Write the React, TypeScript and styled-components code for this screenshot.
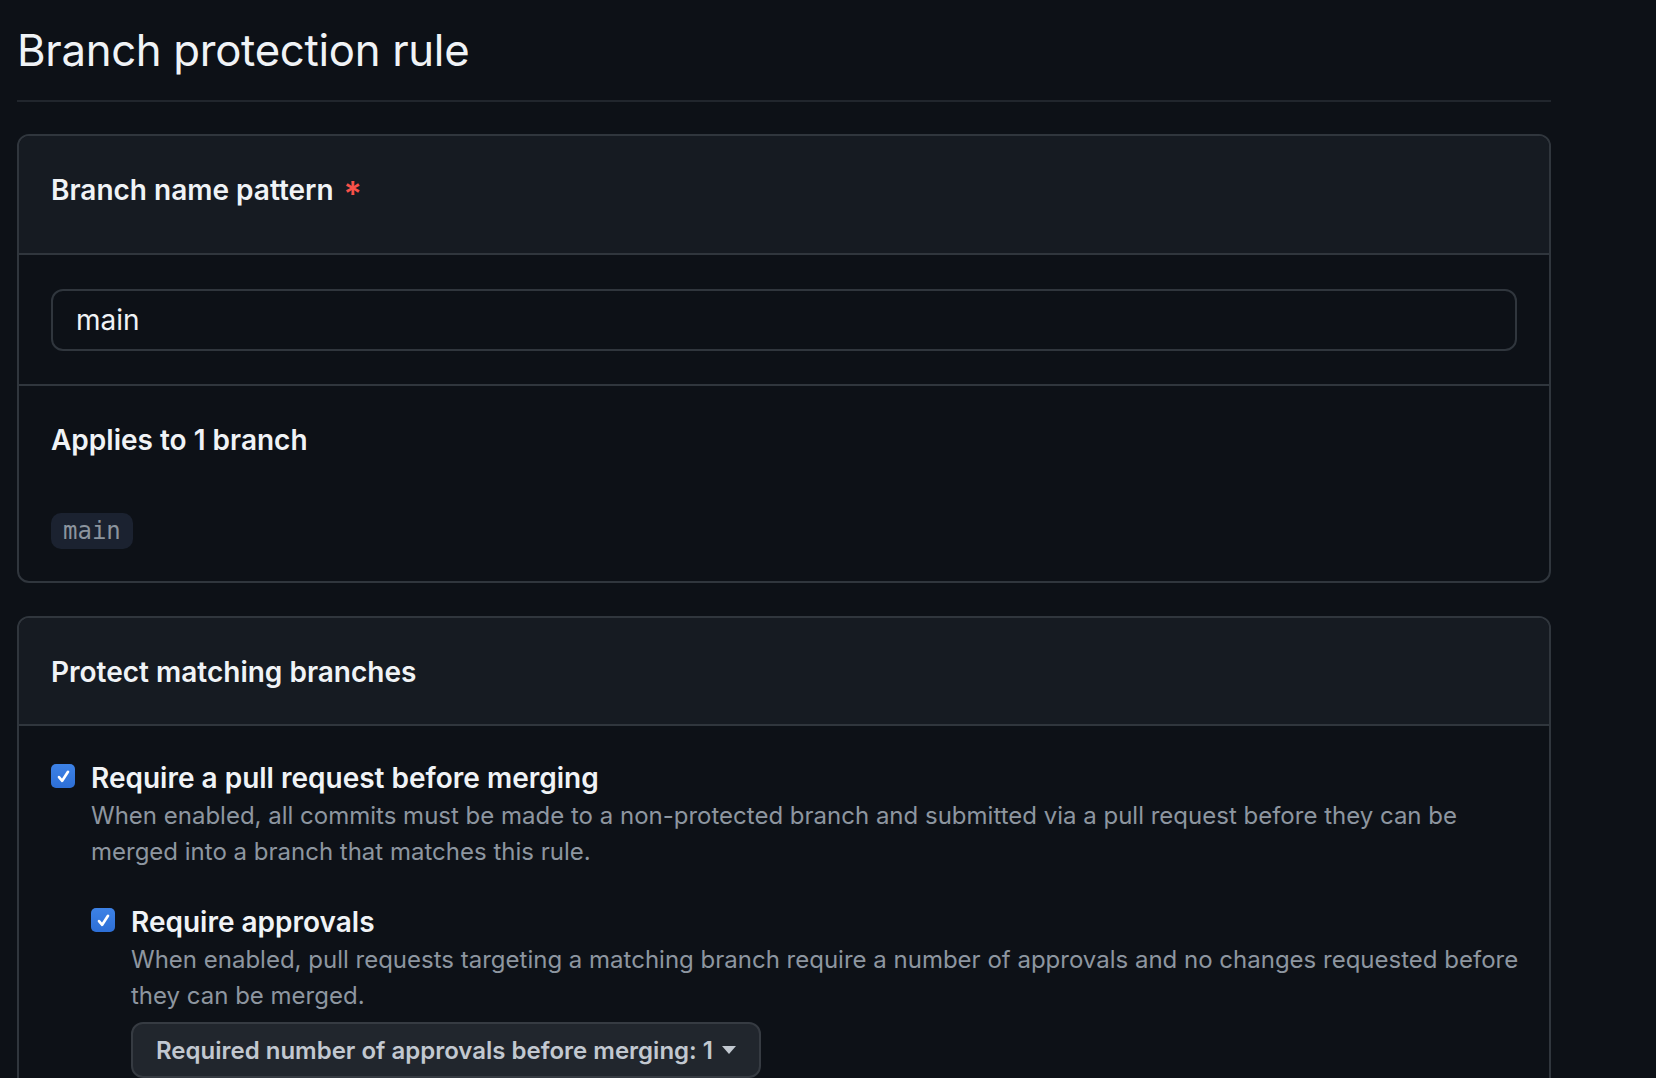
import React from "react";
import styled, { createGlobalStyle } from "styled-components";

const Global = createGlobalStyle`
  html, body {
    margin: 0;
    padding: 0;
    background: #0d1117;
  }
  body {
    font-family: Inter, "Noto Sans", "Liberation Sans", sans-serif;
    color: #e6edf3;
    -webkit-font-smoothing: antialiased;
  }
`;

const Page = styled.div`
  width: 1534px;
  padding: 0 0 40px 17px;
  display: flex;
  flex-direction: column;
`;

const Subhead = styled.div`
  height: 100px;
  display: flex;
  align-items: center;
  border-bottom: 2px solid #21262d;
  margin-bottom: 32px;
`;

const Title = styled.h1`
  margin: 0;
  font-size: 43.7px;
  font-weight: 400;
  letter-spacing: -0.3px;
  color: #f0f3f6;
`;

const Card = styled.section<{ $gap?: number }>`
  border: 2px solid #30363d;
  border-radius: 12px;
  overflow: hidden;
  margin-bottom: ${(p) => p.$gap ?? 0}px;
  display: flex;
  flex-direction: column;
`;

const CardHeader = styled.div<{ $h: number }>`
  height: ${(p) => p.$h}px;
  box-sizing: border-box;
  padding: 34px 32px 0;
  background: #161b22;
  border-bottom: 2px solid #30363d;
`;

const Heading = styled.h3`
  margin: 0;
  font-size: 28px;
  line-height: 40px;
  font-weight: 600;
  color: #f0f3f6;
  display: flex;
  align-items: flex-start;
  gap: 10px;
`;

const Required = styled.span`
  color: #f85149;
  font-size: 34px;
  line-height: 40px;
  margin-top: 4px;
`;

const CardSection = styled.div<{ $pt: number; $pb: number; $pr?: number; $divider?: boolean }>`
  padding: ${(p) => p.$pt}px ${(p) => p.$pr ?? 32}px ${(p) => p.$pb}px 32px;
  border-bottom: ${(p) => (p.$divider ? "2px solid #30363d" : "none")};
  display: flex;
  flex-direction: column;
`;

const TextInput = styled.div`
  height: 62px;
  box-sizing: border-box;
  border: 2px solid #30363d;
  border-radius: 12px;
  background: #0d1117;
  padding: 0 23px;
  display: flex;
  align-items: center;
  font-size: 28px;
  color: #f0f3f6;
`;

const SubHeading = styled.h4`
  margin: 0 0 53px;
  font-size: 28px;
  line-height: 40px;
  font-weight: 600;
  color: #f0f3f6;
`;

const BranchCode = styled.code`
  align-self: flex-start;
  height: 36px;
  box-sizing: border-box;
  padding: 0 12px;
  border-radius: 10px;
  background: #1b2230;
  color: #8b949e;
  font-family: "DejaVu Sans Mono", "Liberation Mono", monospace;
  font-size: 24px;
  line-height: 36px;
`;

const Option = styled.div`
  display: grid;
  grid-template-columns: 23px 1fr;
  column-gap: 17px;
`;

const Check = styled.span`
  width: 24px;
  height: 24px;
  margin-top: 6px;
  border-radius: 5px;
  background: linear-gradient(#3d82e6, #2d6fd6);
  display: flex;
  align-items: center;
  justify-content: center;
`;

const OptionBody = styled.div`
  display: flex;
  flex-direction: column;
`;

const Label = styled.div`
  font-size: 28px;
  line-height: 40px;
  font-weight: 600;
  color: #f0f3f6;
`;

const Note = styled.p`
  margin: 0;
  font-size: 24px;
  line-height: 35.5px;
  color: #8d96a0;
`;

const Nested = styled.div`
  margin-top: 33px;
`;

const SelectButton = styled.button`
  margin-top: 9px;
  align-self: flex-start;
  height: 56px;
  box-sizing: border-box;
  padding: 0 22px 0 23px;
  border: 2px solid #363b42;
  border-radius: 12px;
  background: #21262d;
  color: #c2c8d0;
  font-family: inherit;
  font-size: 24px;
  font-weight: 600;
  display: flex;
  align-items: center;
  gap: 8px;
`;

const CheckMark = () => (
  <svg width="15" height="15" viewBox="0 0 16 16" fill="none">
    <path d="M3.2 8.6 L6.6 12.6 L12.8 3" stroke="#fff" strokeWidth="2.8" strokeLinecap="round" strokeLinejoin="round" />
  </svg>
);

const Caret = () => (
  <svg width="16" height="10" viewBox="0 0 16 10">
    <path d="M1 1 H15 L8 9 Z" fill="#c2c8d0" />
  </svg>
);

export default function App() {
  return (
    <>
      <Global />
      <Page>
        <Subhead>
          <Title>Branch protection rule</Title>
        </Subhead>

        <Card $gap={33}>
          <CardHeader $h={119}>
            <Heading>
              Branch name pattern <Required>*</Required>
            </Heading>
          </CardHeader>
          <CardSection $pt={34} $pb={33} $divider>
            <TextInput>main</TextInput>
          </CardSection>
          <CardSection $pt={34} $pb={32}>
            <SubHeading>Applies to 1 branch</SubHeading>
            <BranchCode>main</BranchCode>
          </CardSection>
        </Card>

        <Card>
          <CardHeader $h={108}>
            <Heading>Protect matching branches</Heading>
          </CardHeader>
          <CardSection $pt={32} $pb={40} $pr={20}>
            <Option>
              <Check>
                <CheckMark />
              </Check>
              <OptionBody>
                <Label>Require a pull request before merging</Label>
                <Note>
                  When enabled, all commits must be made to a non-protected branch and submitted via a pull request before they can be merged into a branch that matches this rule.
                </Note>
                <Nested>
                  <Option>
                    <Check>
                      <CheckMark />
                    </Check>
                    <OptionBody>
                      <Label>Require approvals</Label>
                      <Note>
                        When enabled, pull requests targeting a matching branch require a number of approvals and no changes requested before they can be merged.
                      </Note>
                      <SelectButton>
                        Required number of approvals before merging: 1
                        <Caret />
                      </SelectButton>
                    </OptionBody>
                  </Option>
                </Nested>
              </OptionBody>
            </Option>
          </CardSection>
        </Card>
      </Page>
    </>
  );
}
